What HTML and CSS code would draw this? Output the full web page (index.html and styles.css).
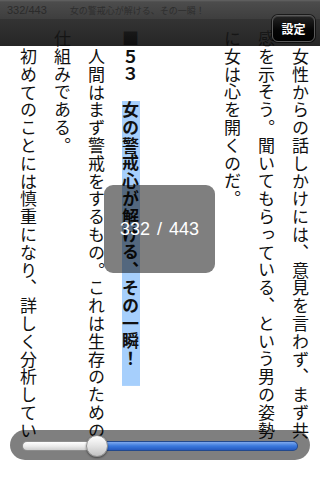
FILE: index.html
```html
<!DOCTYPE html>
<html lang="ja">
<head>
<meta charset="utf-8">
<title>Reader</title>
<link rel="stylesheet" href="styles.css">
</head>
<body>
<div class="screen">
  <article class="book">
    <p class="para">女性からの話しかけには、意見を言わず、まず共感を示そう。聞いてもらっている、という男の姿勢に女は心を開くのだ。</p>
    <h2 class="heading">■５３　<span class="hl">女の警戒心が解ける、その一瞬！</span></h2>
    <p class="para">人間はまず警戒をするもの。これは生存のための仕組みである。</p>
    <p class="para">初めてのことには慎重になり、詳しく分析してい</p>
  </article>
  <header class="topbar">
    <div class="status"><span class="pages">332/443</span><span class="title">女の警戒心が解ける、その一瞬！</span></div>
    <div class="toolbar"><button class="settings">設定</button></div>
  </header>
  <div class="popup">332 / 443</div>
  <div class="slider">
    <div class="track">
      <div class="min" style="width:27%"></div>
      <div class="max"></div>
      <div class="thumb" style="left:27%"></div>
    </div>
  </div>
</div>
</body>
</html>
```

FILE: styles.css
```css
html, body {
  margin: 0;
  padding: 0;
  background: #ffffff;
}

.screen {
  position: relative;
  width: 320px;
  height: 480px;
  overflow: hidden;
  background: #ffffff;
}

.book {
  writing-mode: vertical-rl;
  width: 306px;
  height: 410px;
  margin-left: 11px;
  padding-top: 30px;
  overflow: hidden;
  font-family: "Noto Sans CJK JP", sans-serif;
  font-size: 17px;
  letter-spacing: 0.8px;
  line-height: 34px;
  color: #111111;
}

.para {
  margin: 0;
  text-indent: 17.8px;
}

.heading {
  margin: 0;
  margin-block-start: 68px;
  font-size: 17px;
  font-weight: bold;
  line-height: 34px;
}

.hl {
  padding-inline-end: 17.8px;
  background: linear-gradient(#a6cffc, #a6cffc) center / 18px 100% no-repeat;
}

.topbar {
  position: absolute;
  top: 0;
  left: 0;
  width: 320px;
  height: 46px;
}

.status {
  height: 19px;
  box-sizing: border-box;
  padding: 2px 0 0 7px;
  display: flex;
  align-items: center;
  gap: 23px;
  background: linear-gradient(#646464 0, #4c4c4c 2px, #3e3e3e 100%);
  color: #2b2b2b;
  font-family: "Liberation Sans", "Noto Sans CJK JP", sans-serif;
  line-height: 15px;
}

.pages {
  font-size: 11px;
}

.title {
  font-family: "Noto Sans CJK JP", sans-serif;
  font-size: 9px;
  color: #2e2e2e;
}

.toolbar {
  height: 27px;
  background: linear-gradient(rgba(34, 34, 34, 0.92), rgba(14, 14, 14, 0.9));
}

.settings {
  position: absolute;
  top: 15px;
  right: 5px;
  width: 43px;
  height: 27px;
  padding: 0;
  border: 1px solid #5a5a5a;
  border-radius: 6px;
  background: linear-gradient(#242424, #050505 55%, #000000);
  box-shadow: 0 0 0 1px rgba(0, 0, 0, 0.6), inset 0 1px 0 rgba(255, 255, 255, 0.12);
  color: #ffffff;
  font-family: "Noto Sans CJK JP", sans-serif;
  font-size: 12px;
  font-weight: bold;
  line-height: 25px;
}

.popup {
  position: absolute;
  left: 104px;
  top: 185px;
  width: 111px;
  height: 88px;
  border-radius: 9px;
  background: rgba(0, 0, 0, 0.5);
  display: flex;
  align-items: center;
  justify-content: center;
  color: #ffffff;
  font-family: "Liberation Sans", sans-serif;
  font-size: 18px;
  word-spacing: 2px;
}

.slider {
  position: absolute;
  left: 10px;
  top: 430px;
  width: 300px;
  height: 30px;
  box-sizing: border-box;
  padding: 0 12px;
  border-radius: 15px;
  background: rgba(0, 0, 0, 0.5);
  display: flex;
  align-items: center;
}

.track {
  position: relative;
  flex: 1;
  height: 10px;
  margin-top: 1px;
  display: flex;
}

.min {
  box-sizing: border-box;
  height: 10px;
  border: 1px solid #8d8d8d;
  border-right: none;
  border-radius: 5px 0 0 5px;
  background: linear-gradient(#ffffff, #ececec 50%, #cfcfcf);
}

.max {
  flex: 1;
  box-sizing: border-box;
  height: 10px;
  border: 1px solid #23498c;
  border-left: none;
  border-radius: 0 5px 5px 0;
  background: linear-gradient(#7fa9ee, #3a78dc 50%, #2559c0);
}

.thumb {
  position: absolute;
  top: 50%;
  width: 22px;
  height: 22px;
  box-sizing: border-box;
  border-radius: 50%;
  transform: translate(-50%, -50%);
  border: 1px solid #8f8f8f;
  background: linear-gradient(#ffffff, #e6e6e6 45%, #c2c2c2);
  box-shadow: 0 1px 2px rgba(0, 0, 0, 0.45);
}
```
